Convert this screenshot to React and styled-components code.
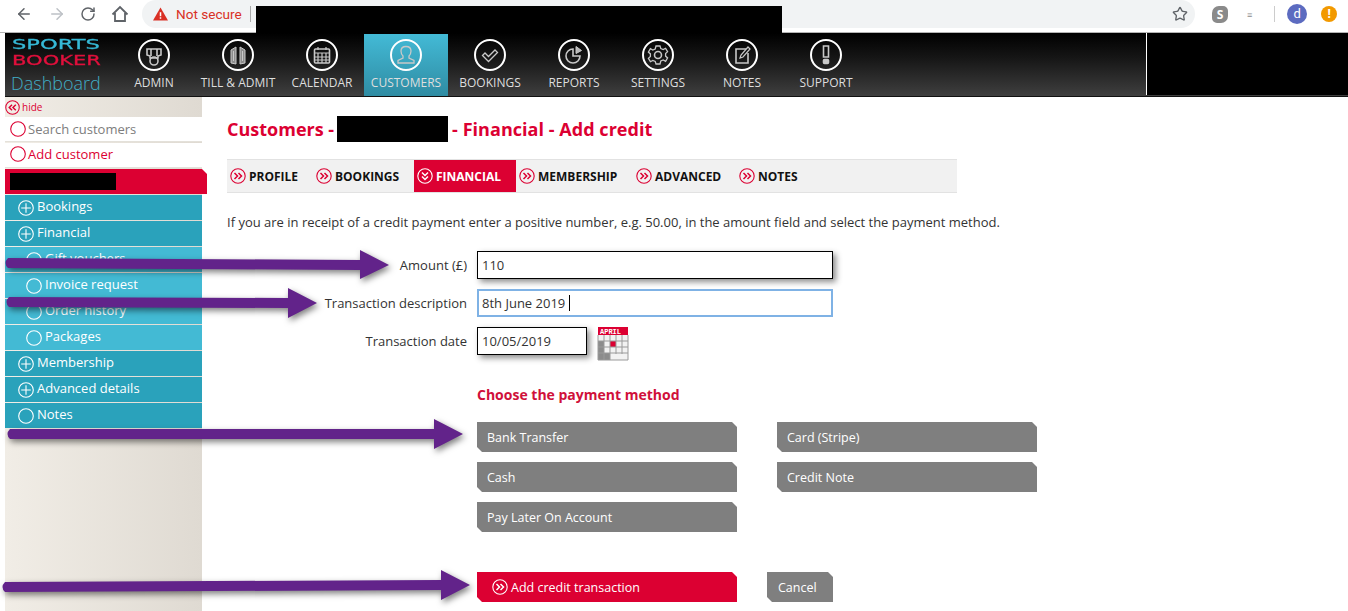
import styled, { createGlobalStyle } from "styled-components";
import { ArrowLeft, ArrowRight, RotateCw, Star } from "lucide-react";

const GlobalStyle = createGlobalStyle`
    html, body {
        margin: 0;
        padding: 0;
        height: 611px;
        overflow: hidden;
        background: #fff;
        font-family: "Open Sans", "Liberation Sans", sans-serif;
    }
`;

const navItems = [
    { label: "ADMIN", icon: "admin" },
    { label: "TILL & ADMIT", icon: "till" },
    { label: "CALENDAR", icon: "calendar" },
    { label: "CUSTOMERS", icon: "customers", active: true },
    { label: "BOOKINGS", icon: "bookings" },
    { label: "REPORTS", icon: "reports" },
    { label: "SETTINGS", icon: "settings" },
    { label: "NOTES", icon: "notes" },
    { label: "SUPPORT", icon: "support" },
];

const sideItems = [
    { label: "Bookings", plus: true },
    { label: "Financial", plus: true },
    { label: "Gift vouchers", sub: true },
    { label: "Invoice request", sub: true },
    { label: "Order history", sub: true },
    { label: "Packages", sub: true },
    { label: "Membership", plus: true },
    { label: "Advanced details", plus: true },
    { label: "Notes" },
];

const tabs = [
    { label: "PROFILE", width: 86 },
    { label: "BOOKINGS", width: 101 },
    { label: "FINANCIAL", width: 102, active: true },
    { label: "MEMBERSHIP", width: 117 },
    { label: "ADVANCED", width: 103 },
    { label: "NOTES", width: 80 },
];

const arrows = [
    "M8 258 L360 260 L360 250 L389 265 L360 279 L360 270 L8 268 Q3 263 8 258 Z",
    "M9 297 L288 298 L288 288 L317 303 L288 318 L288 308 L9 307 Q4 302 9 297 Z",
    "M10 429 L434 429 L434 419 L463 434 L434 449 L434 439 L10 439 Q5 434 10 429 Z",
    "M5 582 L441 580 L441 570 L470 585 L441 600 L441 590 L5 592 Q0 587 5 582 Z",
];

const NavIcon = ({ name }) => {
    const art = {
        admin: (
            <>
                <path d="M9 10h14v6l-3 1v2h-8v-2l-3-1z" />
                <path d="M13 10v7M19 10v7" />
                <circle cx="16" cy="22" r="4" />
            </>
        ),
        till: (
            <>
                <path d="M9 24V11l5-3v17zM23 24V11l-5-3v17z" fill="#8d8d8d" strokeWidth="1" />
                <path d="M11.500 12v10M20.500 12v10" strokeWidth="1" />
            </>
        ),
        calendar: (
            <>
                <rect x="8.5" y="10" width="15" height="14" rx="1" />
                <path d="M8.500 14h15M12 14v10M16 14v10M20 14v10M8.500 18h15M8.500 21h15M12 8v3M20 8v3" strokeWidth="1.200" />
            </>
        ),
        customers: (
            <path d="M8 24v-2.500l5-2.500v-2c-1.500-1.500-2-3-2-5 0-3 2-4.500 5-4.500s5 1.500 5 4.500c0 2-.5 3.500-2 5v2l5 2.500V24z" strokeWidth="1.300" />
        ),
        bookings: <path d="M8.500 16.500l2.500-2.500 3.500 3.500 6.500-6.500 2.500 2.500-9 9z" strokeWidth="1.300" />,
        reports: (
            <>
                <path d="M15 10a7 7 0 1 0 7 7h-7z" />
                <path d="M18 7.500l5.500 4-5.500 3z" fill="#b9b9b9" strokeWidth="1" />
            </>
        ),
        settings: (
            <>
                <circle cx="16" cy="16" r="3.500" />
                <path d="M14 7h4l.8 2.600 2.400 1 2.400-1.300 2 3.400-2 1.800v2.600l2 1.800-2 3.400-2.400-1.300-2.400 1L18 25h-4l-.8-2.600-2.400-1-2.400 1.300-2-3.400 2-1.800v-2.600l-2-1.800 2-3.400 2.400 1.300 2.400-1z" strokeWidth="1.300" />
            </>
        ),
        notes: (
            <>
                <path d="M20 10H10v14h12V14" />
                <path d="M14 19l1-3 7-8 2 2-7 8z" strokeWidth="1.200" />
            </>
        ),
        support: (
            <>
                <path d="M13.500 7h5v11h-5z" />
                <rect x="13.500" y="20.500" width="5" height="4" rx="1" fill="#c8c8c8" />
            </>
        ),
    };
    return (
        <NavSvg viewBox="0 0 32 32">
            <circle cx="16" cy="16" r="15" stroke="#fff" strokeWidth="2" />
            <g stroke="#c8c8c8" strokeWidth="1.600">{art[name]}</g>
        </NavSvg>
    );
};

const RoundChevron = ({ color = "#dc0032", size = 16, dir = "right" }) => (
    <svg width={size} height={size} viewBox="0 0 16 16" fill="none" stroke={color} style={{ flexShrink: 0 }}>
        <circle cx="8" cy="8" r="7.200" strokeWidth="1.100" />
        <g strokeWidth="1.500" transform={dir === "left" ? "rotate(180 8 8)" : dir === "down" ? "rotate(90 8 8)" : undefined}>
            <path d="M4.500 5l3 3-3 3M8.500 5l3 3-3 3" />
        </g>
    </svg>
);

const RingIcon = ({ plus, color = "#fff" }) => (
    <svg width="16" height="16" viewBox="0 0 16 16" fill="none" stroke={color} strokeWidth="1.100" style={{ flexShrink: 0 }}>
        <circle cx="8" cy="8" r="7.300" />
        {plus && <path d="M8 3.200v9.600M3.200 8h9.600" />}
    </svg>
);

const HomeIcon = () => (
    <svg width="18" height="18" viewBox="0 0 18 18" fill="none" stroke="#5f6368" strokeWidth="1.800">
        <path d="M1.500 9.500L9 2l7.500 7.500M4 8v8h10V8" />
    </svg>
);

const CalendarPicker = () => (
    <svg width="32" height="34" viewBox="0 0 32 34" style={{ flexShrink: 0 }}>
        <rect x="1" y="0" width="30" height="8" fill="#dc0032" />
        <text x="3" y="7" fontSize="7" fontWeight="700" fill="#fff" fontFamily="Liberation Mono, monospace">APRIL</text>
        <rect x="1" y="8" width="30" height="25" fill="#f2f2f2" />
        <rect x="1" y="14" width="6" height="19" fill="#8c8c8c" />
        <rect x="7" y="26" width="6" height="7" fill="#8c8c8c" />
        <rect x="13" y="14" width="6" height="6" fill="#dc0032" />
        <path d="M1 8v25h30V8M7 8v25M13 8v25M19 8v19M25 8v19M1 14h30M1 20h30M1 26h30" fill="none" stroke="#9a9a9a" />
    </svg>
);

const App = () => {
    return (
        <>
            <GlobalStyle />
            <BrowserBar>
                <ToolIcons>
                    <ArrowLeft size={18} color="#5f6368" strokeWidth={2} />
                    <ArrowRight size={18} color="#bdc1c6" strokeWidth={2} />
                    <RotateCw size={16} color="#5f6368" strokeWidth={2.200} />
                    <HomeIcon />
                </ToolIcons>
                <AddressPill>
                    <svg width="15" height="14" viewBox="0 0 16 14">
                        <path d="M8 0l8 14H0z" fill="#d93025" />
                        <path d="M7.200 5h1.600v4.500H7.200zM7.200 10.500h1.600V12H7.200z" fill="#fff" />
                    </svg>
                    <NotSecure>Not secure</NotSecure>
                    <PillDivider />
                    <Star size={16} color="#5f6368" strokeWidth={2} />
                </AddressPill>
                <UrlBlock />
                <BarRight>
                    <SkypeBadge>S</SkypeBadge>
                    <TinyExt>≡</TinyExt>
                    <BarDivider />
                    <Avatar>d</Avatar>
                    <UpdateDot>!</UpdateDot>
                </BarRight>
            </BrowserBar>

            <Page>
                <Header>
                    <Logo>
                        <LogoLine color="#36b9d6" $scale={1.67}>SPORTS</LogoLine>
                        <LogoLine color="#e0103c" $scale={1.56}>BOOKER</LogoLine>
                        <LogoSub>Dashboard</LogoSub>
                    </Logo>
                    <Nav>
                        {navItems.map((item) => (
                            <NavItem key={item.label} $active={item.active}>
                                <NavIcon name={item.icon} />
                                <NavLabel>{item.label}</NavLabel>
                            </NavItem>
                        ))}
                    </Nav>
                    <HeaderBlock />
                </Header>

                <Body>
                    <Sidebar>
                        <HideRow>
                            <RoundChevron size={15} dir="left" />
                            <span>hide</span>
                        </HideRow>
                        <LinkRow $muted>
                            <RingIcon color="#dc0032" />
                            Search customers
                        </LinkRow>
                        <LinkRow>
                            <RingIcon color="#dc0032" />
                            Add customer
                        </LinkRow>
                        <CurrentCustomer>
                            <Redact $w={106} $h={17} />
                        </CurrentCustomer>
                        {sideItems.map((item) => (
                            <SideItem key={item.label} $sub={item.sub}>
                                <RingIcon plus={item.plus} />
                                <span>{item.label}</span>
                            </SideItem>
                        ))}
                    </Sidebar>

                    <Main>
                        <Title>
                            <span>Customers -</span>
                            <Redact $w={111} $h={26} />
                            <TitleTail>- Financial - Add credit</TitleTail>
                        </Title>
                        <Tabs>
                            {tabs.map((tab) => (
                                <Tab key={tab.label} $active={tab.active} $w={tab.width}>
                                    <RoundChevron color={tab.active ? "#fff" : "#dc0032"} dir={tab.active ? "down" : "right"} />
                                    {tab.label}
                                </Tab>
                            ))}
                        </Tabs>
                        <Intro>
                            If you are in receipt of a credit payment enter a positive number, e.g. 50.00, in the amount field and select the payment method.
                        </Intro>

                        <Form>
                            <FormRow>
                                <FieldLabel>Amount (£)</FieldLabel>
                                <Field $w={356}>110</Field>
                            </FormRow>
                            <FormRow>
                                <FieldLabel>Transaction description</FieldLabel>
                                <Field $w={356} $focus>
                                    8th June 2019
                                    <Caret />
                                </Field>
                            </FormRow>
                            <FormRow>
                                <FieldLabel>Transaction date</FieldLabel>
                                <Field $w={110}>10/05/2019</Field>
                                <CalendarPicker />
                            </FormRow>
                        </Form>

                        <PaymentSection>
                            <SectionTitle>Choose the payment method</SectionTitle>
                            <MethodGrid>
                                <CutButton>Bank Transfer</CutButton>
                                <CutButton>Card (Stripe)</CutButton>
                                <CutButton>Cash</CutButton>
                                <CutButton>Credit Note</CutButton>
                                <CutButton>Pay Later On Account</CutButton>
                            </MethodGrid>
                            <Actions>
                                <SubmitButton>
                                    <RoundChevron color="#fff" />
                                    Add credit transaction
                                </SubmitButton>
                                <CancelButton>Cancel</CancelButton>
                            </Actions>
                        </PaymentSection>
                    </Main>
                </Body>
            </Page>

            <ArrowLayer viewBox="0 0 1348 611">
                {arrows.map((d) => (
                    <path key={d} d={d} fill="#62238a" />
                ))}
            </ArrowLayer>
        </>
    );
};

const BrowserBar = styled.div`
    height: 33px;
    box-sizing: border-box;
    background: #fff;
    border-bottom: 1px solid #b4b4b4;
    display: flex;
    align-items: flex-start;
    position: relative;
`;

const ToolIcons = styled.div`
    width: 142px;
    height: 28px;
    flex-shrink: 0;
    box-sizing: border-box;
    padding: 0 13px 0 15px;
    display: flex;
    align-items: center;
    justify-content: space-between;
`;

const AddressPill = styled.div`
    width: 1053px;
    height: 28px;
    flex-shrink: 0;
    box-sizing: border-box;
    padding: 0 7px 0 11px;
    border-radius: 14px;
    background: #f1f3f4;
    display: flex;
    align-items: center;
    svg:last-child {
        margin-left: auto;
    }
`;

const NotSecure = styled.span`
    margin-left: 8px;
    font-family: Roboto, sans-serif;
    font-size: 13.600px;
    color: #d93025;
`;

const PillDivider = styled.span`
    width: 1px;
    height: 16px;
    margin-left: 8px;
    background: #aaa;
`;

const UrlBlock = styled.div`
    position: absolute;
    left: 256px;
    top: 6px;
    width: 526px;
    height: 27px;
    background: #000;
`;

const BarRight = styled.div`
    flex: 1;
    height: 28px;
    display: flex;
    align-items: center;
`;

const SkypeBadge = styled.span`
    width: 16px;
    height: 17px;
    margin-left: 17px;
    border-radius: 7px 5px 7px 5px;
    background: #8a8a8a;
    color: #fff;
    font-size: 12px;
    font-weight: 700;
    line-height: 17px;
    text-align: center;
`;

const TinyExt = styled.span`
    margin-left: 19px;
    font-size: 9px;
    color: #8a8a8a;
`;

const BarDivider = styled.span`
    width: 1px;
    height: 16px;
    margin-left: 22px;
    background: #ccc;
`;

const Avatar = styled.span`
    width: 20px;
    height: 20px;
    margin-left: 12px;
    border-radius: 50%;
    background: #5c6bc0;
    color: #fff;
    font-family: Roboto, sans-serif;
    font-size: 13px;
    line-height: 20px;
    text-align: center;
`;

const UpdateDot = styled.span`
    width: 16px;
    height: 16px;
    margin-left: 14px;
    border-radius: 50%;
    background: #f29900;
    color: #fff;
    font-size: 12px;
    font-weight: 700;
    line-height: 16px;
    text-align: center;
`;

const Page = styled.div`
    padding-left: 5px;
`;

const Header = styled.div`
    height: 64px;
    box-sizing: border-box;
    border-bottom: 1px solid #111;
    background: linear-gradient(#000 0%, #161616 40%, #3f3f3f 100%);
    display: flex;
`;

const Logo = styled.div`
    width: 107px;
    flex-shrink: 0;
    box-sizing: border-box;
    padding: 4px 0 0 7px;
`;

const LogoLine = styled.div`
    height: 15.500px;
    font-family: "DejaVu Sans", sans-serif;
    font-size: 13.500px;
    line-height: 15.500px;
    color: ${(props) => props.color};
    -webkit-text-stroke: 0.3px ${(props) => props.color};
    transform: scaleX(${(props) => props.$scale});
    transform-origin: left center;
`;

const LogoSub = styled.div`
    margin: 3px 0 0 -1px;
    font-size: 18px;
    font-weight: 300;
    line-height: 24px;
    color: #40aec7;
`;

const Nav = styled.div`
    display: flex;
    flex: 1;
`;

const NavItem = styled.div`
    width: 84px;
    height: 62px;
    margin-top: 1px;
    flex-shrink: 0;
    display: flex;
    flex-direction: column;
    align-items: center;
    padding-top: 5px;
    box-sizing: border-box;
    background: ${(props) => (props.$active ? "linear-gradient(#43bad6, #2f8ca3)" : "none")};
`;

const NavSvg = styled.svg`
    width: 32px;
    height: 32px;
    fill: none;
`;

const NavLabel = styled.span`
    margin-top: 4px;
    font-size: 12px;
    line-height: 16px;
    white-space: nowrap;
    color: #dedede;
`;

const HeaderBlock = styled.div`
    width: 201px;
    height: 62px;
    flex-shrink: 0;
    border-left: 1px solid #fff;
    background: #000;
`;

const Body = styled.div`
    display: flex;
    height: 514px;
`;

const Sidebar = styled.div`
    width: 197px;
    flex-shrink: 0;
    background: linear-gradient(90deg, #f1ede6, #dfdad2);
`;

const HideRow = styled.div`
    height: 20px;
    display: flex;
    align-items: center;
    gap: 2px;
    font-size: 10px;
    color: #dc0032;
`;

const LinkRow = styled.div`
    height: 25px;
    margin-bottom: 1px;
    box-sizing: border-box;
    padding: 0 0 ${(props) => (props.$muted ? "0" : "2px")} 5px;
    background: #fff;
    border-bottom: 1px solid #e4e1da;
    display: flex;
    align-items: center;
    gap: 2px;
    font-size: 13px;
    color: ${(props) => (props.$muted ? "#7d7d7d" : "#dc0032")};
`;

const CurrentCustomer = styled.div`
    width: 202px;
    height: 25px;
    margin-bottom: 1px;
    box-sizing: border-box;
    padding-left: 5px;
    background: #dc0032;
    clip-path: polygon(0 0, 197px 0, 100% 5px, 100% 100%, 0 100%);
    display: flex;
    align-items: center;
`;

const SideItem = styled.div`
    height: 25px;
    margin-bottom: 1px;
    box-sizing: border-box;
    padding-left: ${(props) => (props.$sub ? "21px" : "13px")};
    background: ${(props) => (props.$sub ? "#43bad4" : "#2aa2bb")};
    display: flex;
    align-items: center;
    gap: 3px;
    font-size: 13px;
    color: #fff;
    span {
        margin-top: -3px;
    }
`;

const Main = styled.div`
    flex: 1;
    padding: 19px 0 0 25px;
`;

const Title = styled.h1`
    margin: 0;
    height: 26px;
    display: flex;
    align-items: center;
    gap: 3px;
    font-size: 18px;
    font-weight: 700;
    white-space: nowrap;
    color: #dc0032;
`;

const TitleTail = styled.span`
    margin-left: 1px;
    letter-spacing: 0.04px;
`;

const Redact = styled.span`
    display: inline-block;
    width: ${(props) => props.$w}px;
    height: ${(props) => props.$h}px;
    background: #000;
`;

const Tabs = styled.div`
    width: 730px;
    height: 34px;
    margin-top: 17px;
    box-sizing: border-box;
    background: #f1f1f1;
    border-top: 1px solid #e2e2e2;
    border-bottom: 1px solid #e2e2e2;
    display: flex;
`;

const Tab = styled.div`
    width: ${(props) => props.$w}px;
    flex-shrink: 0;
    box-sizing: border-box;
    padding-left: 3px;
    display: flex;
    align-items: center;
    gap: 3px;
    font-size: 12px;
    font-weight: 700;
    color: ${(props) => (props.$active ? "#fff" : "#111")};
    background: ${(props) => (props.$active ? "#dc0032" : "none")};
`;

const Intro = styled.p`
    margin: 20px 0 0;
    font-size: 13px;
    line-height: 18px;
    white-space: nowrap;
    color: #333;
`;

const Form = styled.div`
    margin-top: 20px;
    display: flex;
    flex-direction: column;
    gap: 10px;
`;

const FormRow = styled.div`
    display: flex;
    align-items: flex-start;
    gap: 10px;
`;

const FieldLabel = styled.span`
    width: 240px;
    flex-shrink: 0;
    text-align: right;
    font-size: 13px;
    line-height: 28px;
    color: #333;
`;

const Field = styled.div`
    width: ${(props) => props.$w}px;
    height: 28px;
    box-sizing: border-box;
    padding-left: ${(props) => (props.$focus ? "3px" : "4px")};
    display: flex;
    align-items: center;
    font-size: 13px;
    color: #333;
    background: #fff;
    border: ${(props) => (props.$focus ? "2px solid #7fb2e5" : "1px solid #000")};
    box-shadow: ${(props) => (props.$focus ? "none" : "3px 3px 6px rgba(0, 0, 0, 0.45)")};
`;

const Caret = styled.span`
    width: 1px;
    height: 16px;
    margin-left: 4px;
    background: #000;
`;

const PaymentSection = styled.div`
    margin-left: 250px;
`;

const SectionTitle = styled.h2`
    margin: 23px 0 0;
    height: 22px;
    font-size: 14px;
    font-weight: 700;
    line-height: 22px;
    color: #d0103a;
`;

const MethodGrid = styled.div`
    margin-top: 16px;
    display: grid;
    grid-template-columns: 260px 260px;
    grid-auto-rows: 30px;
    gap: 10px 40px;
    width: 560px;
`;

const CutButton = styled.div`
    height: 30px;
    box-sizing: border-box;
    padding-left: 10px;
    display: flex;
    align-items: center;
    font-size: 12.500px;
    color: #fff;
    background: #7f7f7f;
    clip-path: polygon(0 0, calc(100% - 5px) 0, 100% 5px, 100% 100%, 5px 100%, 0 calc(100% - 5px));
`;

const Actions = styled.div`
    margin-top: 40px;
    display: flex;
    gap: 30px;
`;

const SubmitButton = styled(CutButton)`
    width: 260px;
    padding-left: 15px;
    gap: 3px;
    background: #dc0032;
`;

const CancelButton = styled(CutButton)`
    width: 66px;
    padding-left: 11px;
`;

const ArrowLayer = styled.svg`
    position: absolute;
    left: 0;
    top: 0;
    width: 1348px;
    height: 611px;
    pointer-events: none;
    filter: drop-shadow(2px 3px 3px rgba(0, 0, 0, 0.5));
`;

export default App;
